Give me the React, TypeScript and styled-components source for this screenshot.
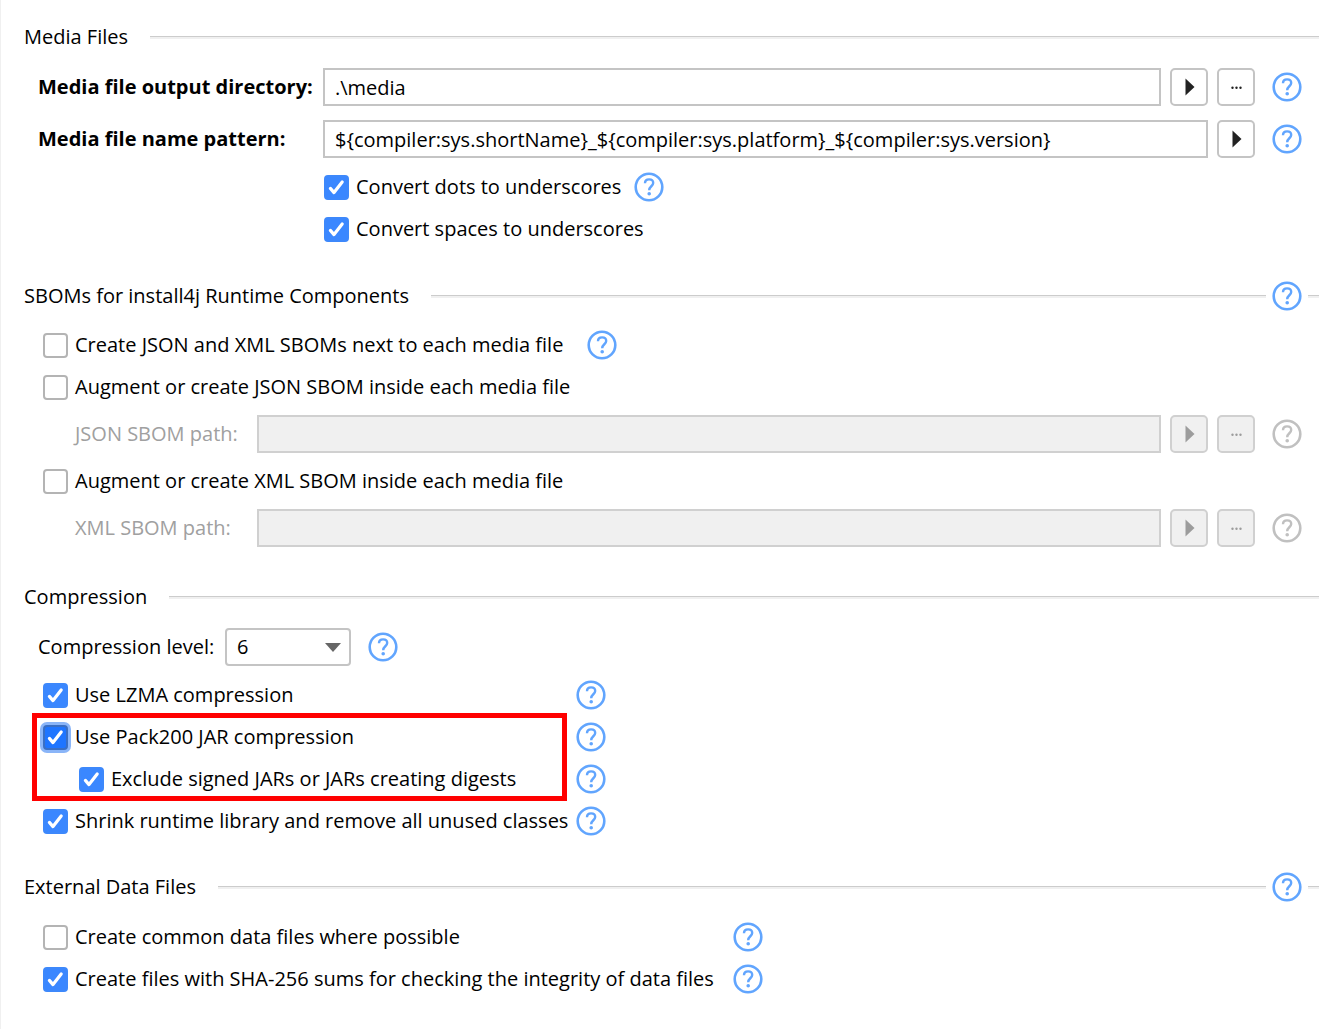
import React from "react";
import styled, { createGlobalStyle, css } from "styled-components";

const GlobalStyle = createGlobalStyle`
  *, *::before, *::after { box-sizing: border-box; }
  body {
    margin: 0;
    background: #ffffff;
  }
  body, button, input, select {
    font-family: "Open Sans", "Noto Sans", sans-serif;
    font-size: 20px;
    line-height: 30px;
    color: #000000;
  }
`;

const Page = styled.main`
  min-height: 100vh;
  padding: 22px 18px 24px 23px;
  border-left: 1px solid #f0f0f0;
`;

const Section = styled.section<{ $gapAbove?: number }>`
  margin-top: ${(p) => p.$gapAbove ?? 0}px;
`;

const Header = styled.header`
  display: flex;
  align-items: center;
  gap: 6px;
  height: 30px;
`;

const Title = styled.h2`
  margin: 0 16px 0 0;
  font-size: 20px;
  font-weight: 400;
  line-height: 30px;
  white-space: nowrap;
`;

const Rule = styled.span<{ $short?: boolean }>`
  flex: ${(p) => (p.$short ? "0 0 11px" : "1 1 0")};
  height: 3px;
  border-top: 1px solid #cccccc;
  border-bottom: 2px solid #f0f0f0;
`;

const Body = styled.div<{ $top: number }>`
  padding: ${(p) => p.$top}px 17px 0 14px;
`;

const FieldRow = styled.div<{ $nested?: boolean; $gapBelow?: number }>`
  display: flex;
  align-items: center;
  gap: 9px;
  height: 38px;
  margin-bottom: ${(p) => p.$gapBelow ?? 8}px;
  ${(p) =>
    p.$nested &&
    css`
      margin: 7px 0;
      padding-left: 37px;
    `}
`;

const FieldLabel = styled.label<{ $width: number; $bold?: boolean; $muted?: boolean }>`
  flex: 0 0 ${(p) => p.$width}px;
  font-weight: ${(p) => (p.$bold ? 700 : 400)};
  color: ${(p) => (p.$muted ? "#a0a0a0" : "#000000")};
  white-space: nowrap;
`;

const TextField = styled.input`
  flex: 1 1 0;
  min-width: 0;
  height: 38px;
  padding: 0 10px;
  border: 2px solid #c4c4c4;
  border-radius: 0;
  background: #ffffff;
  outline: none;
  &:disabled {
    border-color: #d0d0d0;
    background: #f0f0f0;
  }
`;

const ToolButton = styled.button`
  display: flex;
  flex: 0 0 38px;
  align-items: center;
  justify-content: center;
  height: 38px;
  padding: 0;
  border: 2px solid #c4c4c4;
  border-radius: 5px;
  background: #ffffff;
  color: #222222;
  &:disabled {
    border-color: #d0d0d0;
    background: #f0f0f0;
    color: #9c9c9c;
  }
`;

const HelpButton = styled.button<{ $spaced?: boolean }>`
  display: block;
  flex: 0 0 30px;
  height: 30px;
  margin: 0 0 0 ${(p) => (p.$spaced ? 8 : 0)}px;
  padding: 0;
  border: 0;
  background: none;
  color: #61a5fe;
  &:disabled {
    color: #c0c0c0;
  }
`;

const CheckRow = styled.div<{ $indent?: number }>`
  display: flex;
  align-items: center;
  gap: 16px;
  height: 42px;
  padding-left: ${(p) => p.$indent ?? 5}px;
`;

const CheckLabel = styled.label<{ $width?: number }>`
  display: flex;
  align-items: center;
  gap: 7px;
  width: ${(p) => (p.$width ? `${p.$width}px` : "auto")};
  white-space: nowrap;
`;

const tick = `url("data:image/svg+xml,%3Csvg xmlns='http://www.w3.org/2000/svg' width='25' height='25' viewBox='0 0 25 25' fill='none' stroke='white' stroke-width='3.2' stroke-linecap='round' stroke-linejoin='round'%3E%3Cpath d='M6.4 13.4L10 17.6L18.2 7'/%3E%3C/svg%3E")`;

const CheckBox = styled.input<{ $focused?: boolean }>`
  appearance: none;
  flex: 0 0 25px;
  height: 25px;
  margin: 0;
  border: 2px solid #b4b4b4;
  border-radius: 4px;
  background: #ffffff;
  outline: none;
  &:checked {
    border-color: #3d88fb;
    background: #3a87ff ${tick} center / 25px 25px no-repeat border-box;
  }
  ${(p) =>
    p.$focused &&
    css`
      &:checked {
        border-color: #3a6fc4;
        background-color: #1f75ff;
        box-shadow: 0 0 0 3px #8ab5f8;
      }
    `}
`;

const Highlight = styled.div`
  position: relative;
  &::after {
    content: "";
    position: absolute;
    top: -3px;
    bottom: -1px;
    left: -6px;
    width: 535px;
    border: 5px solid #ff0000;
    pointer-events: none;
  }
`;

const SelectBox = styled.span`
  position: relative;
  flex: 0 0 126px;
  height: 38px;
`;

const Select = styled.select`
  appearance: none;
  width: 100%;
  height: 38px;
  padding: 0 10px;
  border: 2px solid #c4c4c4;
  border-radius: 4px;
  background: #ffffff;
  outline: none;
`;

const SelectArrow = styled.svg`
  position: absolute;
  top: 15px;
  right: 10px;
  pointer-events: none;
`;

function Help({ topic, disabled, spaced }: { topic: string; disabled?: boolean; spaced?: boolean }) {
  return (
    <HelpButton type="button" aria-label={`Help: ${topic}`} disabled={disabled} $spaced={spaced}>
      <svg width="30" height="30" viewBox="0 0 30 30" fill="none" stroke="currentColor" display="block">
        <circle cx="15" cy="15" r="13.3" strokeWidth="2.6" />
        <path d="M11 11.2C11 8.7 12.8 7.4 15.1 7.4C17.5 7.4 19.2 8.8 19.2 11C19.2 14.2 15.2 14.4 15.2 18.2" strokeWidth="2.4" />
        <circle cx="15.2" cy="21.8" r="1.8" fill="currentColor" stroke="none" />
      </svg>
    </HelpButton>
  );
}

function Insert({ disabled }: { disabled?: boolean }) {
  return (
    <ToolButton type="button" aria-label="Insert variable" disabled={disabled}>
      <svg width="12" height="18" viewBox="0 0 12 18">
        <path d="M2.5 0.5L11.5 9L2.5 17.5Z" fill="currentColor" />
      </svg>
    </ToolButton>
  );
}

function Browse({ disabled }: { disabled?: boolean }) {
  return (
    <ToolButton type="button" aria-label="Browse" disabled={disabled}>
      <svg width="12" height="4" viewBox="0 0 12 4" fill="currentColor">
        <circle cx="2.5" cy="2.8" r="1.2" />
        <circle cx="6.5" cy="2.8" r="1.2" />
        <circle cx="10.5" cy="2.8" r="1.2" />
      </svg>
    </ToolButton>
  );
}

function SectionHeader({ title, help }: { title: string; help?: boolean }) {
  return (
    <Header>
      <Title>{title}</Title>
      <Rule />
      {help && <Help topic={title} />}
      {help && <Rule $short />}
    </Header>
  );
}

type CheckProps = {
  text: string;
  checked?: boolean;
  focused?: boolean;
  help?: boolean;
  indent?: number;
  width?: number;
};

function Check({ text, checked, focused, help, indent, width }: CheckProps) {
  return (
    <CheckRow $indent={indent}>
      <CheckLabel $width={width}>
        <CheckBox type="checkbox" defaultChecked={checked} $focused={focused} />
        {text}
      </CheckLabel>
      {help && <Help topic={text} />}
    </CheckRow>
  );
}

function SbomPath({ id, label }: { id: string; label: string }) {
  return (
    <FieldRow $nested>
      <FieldLabel htmlFor={id} $width={173} $muted>{label}</FieldLabel>
      <TextField id={id} type="text" disabled />
      <Insert disabled />
      <Browse disabled />
      <Help topic={label} disabled spaced />
    </FieldRow>
  );
}

export default function App() {
  return (
    <>
      <GlobalStyle />
      <Page>
        <Section>
          <SectionHeader title="Media Files" />
          <Body $top={16}>
            <FieldRow $gapBelow={14}>
              <FieldLabel htmlFor="output-dir" $width={276} $bold>Media file output directory:</FieldLabel>
              <TextField id="output-dir" type="text" defaultValue=".\media" />
              <Insert />
              <Browse />
              <Help topic="Media file output directory" spaced />
            </FieldRow>
            <FieldRow>
              <FieldLabel htmlFor="name-pattern" $width={276} $bold>Media file name pattern:</FieldLabel>
              <TextField
                id="name-pattern"
                type="text"
                defaultValue="${compiler:sys.shortName}_${compiler:sys.platform}_${compiler:sys.version}"
              />
              <Insert />
              <Help topic="Media file name pattern" spaced />
            </FieldRow>
            <Check text="Convert dots to underscores" indent={286} width={294} checked help />
            <Check text="Convert spaces to underscores" indent={286} checked />
          </Body>
        </Section>

        <Section $gapAbove={31}>
          <SectionHeader title="SBOMs for install4j Runtime Components" help />
          <Body $top={13}>
            <Check text="Create JSON and XML SBOMs next to each media file" width={528} help />
            <Check text="Augment or create JSON SBOM inside each media file" />
            <SbomPath id="json-path" label="JSON SBOM path:" />
            <Check text="Augment or create XML SBOM inside each media file" />
            <SbomPath id="xml-path" label="XML SBOM path:" />
          </Body>
        </Section>

        <Section $gapAbove={35}>
          <SectionHeader title="Compression" />
          <Body $top={16}>
            <FieldRow>
              <FieldLabel htmlFor="level" $width={178}>Compression level:</FieldLabel>
              <SelectBox>
                <Select id="level" defaultValue="6">
                  {["1", "2", "3", "4", "5", "6", "7", "8", "9"].map((n) => (
                    <option key={n}>{n}</option>
                  ))}
                </Select>
                <SelectArrow width="16" height="9" viewBox="0 0 16 9">
                  <path d="M0 0H16L8 9Z" fill="#666666" />
                </SelectArrow>
              </SelectBox>
              <Help topic="Compression level" spaced />
            </FieldRow>
            <Check text="Use LZMA compression" width={517} checked help />
            <Highlight>
              <Check text="Use Pack200 JAR compression" width={517} checked focused help />
              <Check text="Exclude signed JARs or JARs creating digests" indent={41} width={481} checked help />
            </Highlight>
            <Check text="Shrink runtime library and remove all unused classes" width={517} checked help />
          </Body>
        </Section>

        <Section $gapAbove={30}>
          <SectionHeader title="External Data Files" help />
          <Body $top={14}>
            <Check text="Create common data files where possible" width={674} help />
            <Check text="Create files with SHA-256 sums for checking the integrity of data files" width={674} checked help />
          </Body>
        </Section>
      </Page>
    </>
  );
}
